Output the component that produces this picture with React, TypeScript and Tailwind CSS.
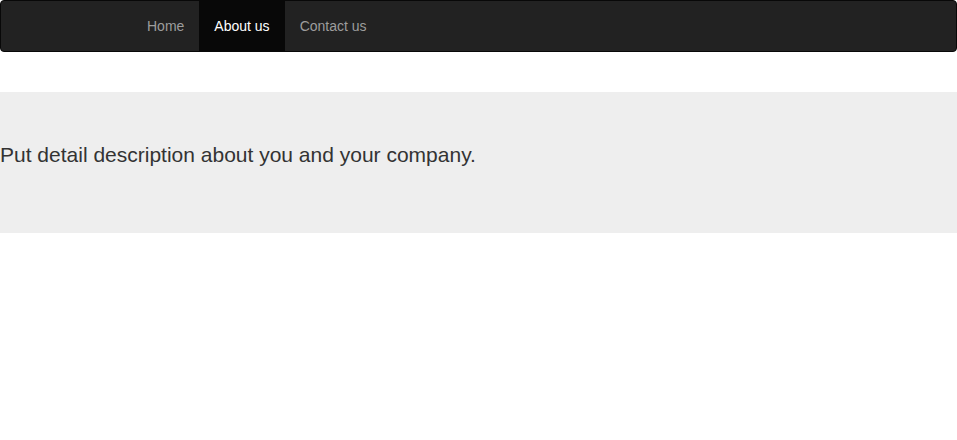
export default function App() {
  return (
    <div className="min-h-[440px] bg-white font-['Liberation_Sans',Arial,sans-serif] text-[14px] text-[#333]">
      {/* navbar */}
      <nav className="h-[52px] rounded-[4px] border border-[#080808] bg-[#222]">
        <ul className="flex h-[50px] pl-[131px]">
          <li>
            <a href="#" className="block px-[15px] leading-[50px] text-[#9d9d9d]">
              Home
            </a>
          </li>
          <li>
            <a href="#" className="block bg-[#080808] px-[15px] leading-[50px] text-white">
              About us
            </a>
          </li>
          <li>
            <a href="#" className="block px-[15px] leading-[50px] text-[#9d9d9d]">
              Contact us
            </a>
          </li>
        </ul>
      </nav>

      {/* jumbotron */}
      <div className="mt-[40px] bg-[#eee] py-[48px]">
        <p className="mb-[15px] text-[21px] leading-[30px] text-[#333]">
          Put detail description about you and your company.
        </p>
      </div>
    </div>
  )
}
